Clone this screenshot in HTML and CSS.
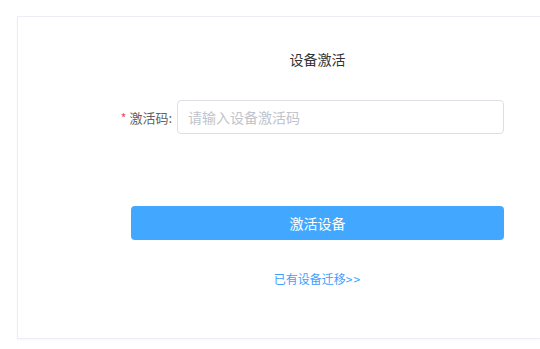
FILE: index.html
```html
<!DOCTYPE html>
<html lang="zh">
<head>
<meta charset="utf-8">
<link rel="stylesheet" href="styles.css">
</head>
<body>
<div class="page">
  <div class="card">
    <div class="content">
      <div class="title">设备激活</div>
      <div class="form-row">
        <label class="label"><span class="star">*</span>激活码:</label>
        <div class="input"><span class="placeholder">请输入设备激活码</span></div>
      </div>
      <button class="btn">激活设备</button>
      <a class="link">已有设备迁移<span class="arrows">&gt;&gt;</span></a>
    </div>
  </div>
</div>
</body>
</html>
```

FILE: styles.css
```css
html, body {
  margin: 0;
  padding: 0;
  background: #ffffff;
  overflow: hidden;
}
body {
  font-family: "Noto Sans CJK SC", "Liberation Sans", sans-serif;
  width: 540px;
  height: 349px;
}
.page {
  padding: 16px 0 0 17px;
}
.card {
  box-sizing: border-box;
  width: 523px;
  height: 323px;
  border: 1px solid #ebeef5;
  border-right: none;
  box-shadow: 0 1px 3px rgba(0, 0, 0, 0.04);
  background: #fff;
}
.content {
  width: 373px;
  margin-left: 113px;
  padding-top: 32px;
  display: flex;
  flex-direction: column;
}
.title {
  text-align: center;
  font-size: 14px;
  line-height: 20px;
  color: #333;
}
.form-row {
  display: flex;
  align-items: center;
  margin-top: 31px;
  height: 34px;
}
.label {
  flex: none;
  width: 46px;
  display: flex;
  justify-content: flex-end;
  align-items: center;
  padding-right: 5px;
  box-sizing: border-box;
  font-size: 13px;
  color: #606266;
  white-space: nowrap;
}
.star {
  color: #f04848;
  margin-right: 3px;
  font-size: 12px;
}
.input {
  flex: 1;
  height: 34px;
  box-sizing: border-box;
  border: 1px solid #dcdfe6;
  border-radius: 4px;
  padding-left: 10px;
  display: flex;
  align-items: center;
  font-size: 14px;
}
.placeholder {
  color: #c0c4cc;
}
.btn {
  margin-top: 72px;
  height: 34px;
  border: none;
  border-radius: 4px;
  background: #42a8ff;
  color: #fff;
  font-family: inherit;
  font-size: 14px;
  padding: 0;
}
.link {
  margin-top: 30px;
  align-self: center;
  font-size: 12px;
  line-height: 18px;
  color: #409eff;
  text-decoration: none;
}
.arrows {
  letter-spacing: 1px;
}
```
